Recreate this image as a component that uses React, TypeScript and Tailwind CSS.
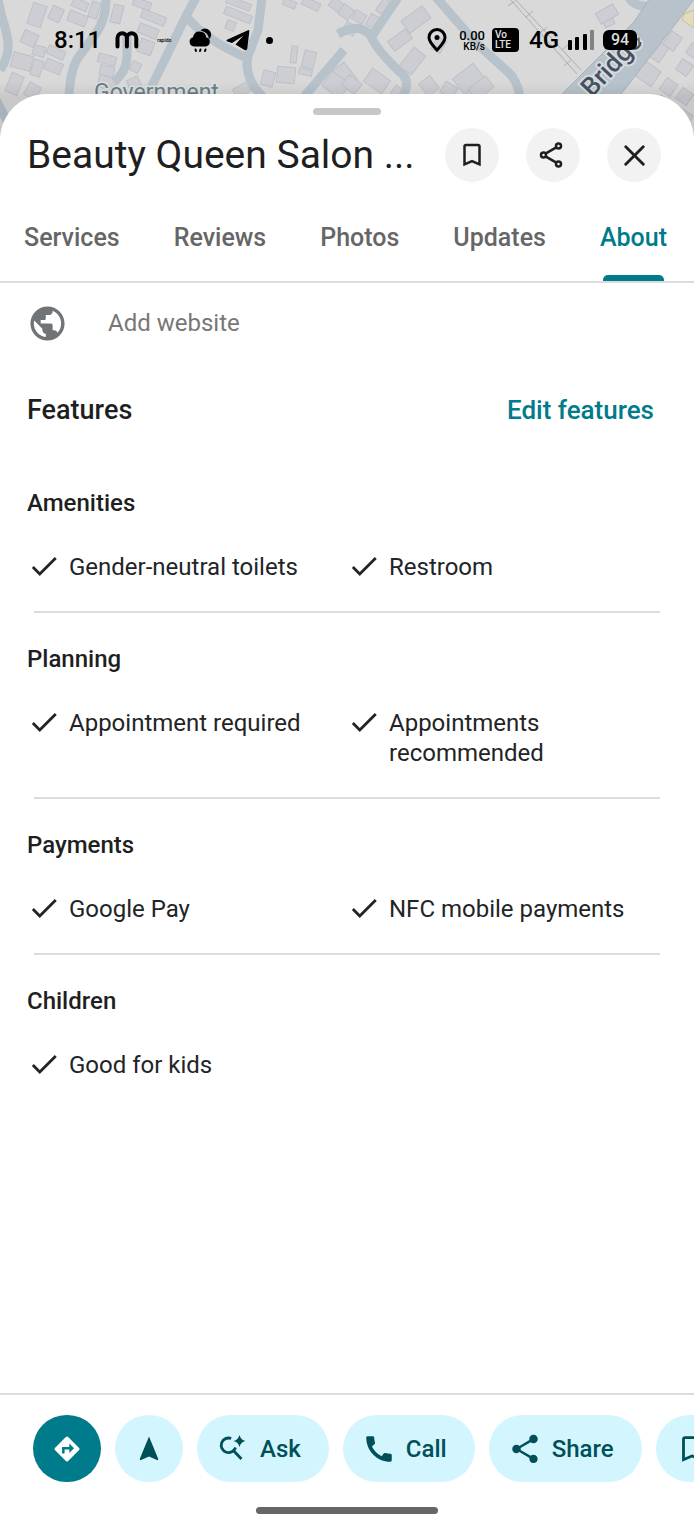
import type { ReactNode } from 'react'
import { X } from 'lucide-react'
import {
  MdBookmarkBorder,
  MdCall,
  MdCheck,
  MdNavigation,
  MdPublic,
  MdShare,
} from 'react-icons/md'

const tabs = ['Services', 'Reviews', 'Photos', 'Updates', 'About']

const featureGroups = [
  { title: 'Amenities', items: ['Gender-neutral toilets', 'Restroom'] },
  { title: 'Planning', items: ['Appointment required', 'Appointments recommended'] },
  { title: 'Payments', items: ['Google Pay', 'NFC mobile payments'] },
  { title: 'Children', items: ['Good for kids'] },
]

// x, y, width, height, rotation
const buildings = [
  [30, 4, 14, 22, 18], [50, 7, 12, 14, 25], [68, 13, 19, 11, 22], [72, 0, 16, 9, 24],
  [90, 2, 9, 16, 18], [112, 5, 10, 18, 14], [133, 0, 18, 8, 20], [141, 13, 25, 9, 22],
  [138, 26, 20, 10, 22], [22, 32, 15, 13, 25], [12, 54, 20, 15, 15], [33, 46, 12, 10, 15],
  [47, 48, 18, 9, 25], [45, 61, 17, 11, 22], [32, 60, 10, 16, 18], [8, 74, 13, 20, 22],
  [26, 84, 13, 14, 30], [98, 55, 18, 9, 15], [100, 66, 14, 10, 12], [98, 77, 17, 12, 20],
  [131, 62, 9, 10, 25], [128, 78, 12, 10, -25], [139, 40, 14, 14, 20], [226, 0, 25, 7, 20],
  [224, 11, 28, 8, 22], [226, 21, 9, 9, 20], [262, 71, 12, 15, 15], [277, 67, 18, 16, 5],
  [291, 46, 6, 17, 6], [303, 51, 12, 17, 14], [299, 69, 13, 6, 12], [283, 0, 13, 7, 22],
  [302, 0, 18, 8, 24], [330, 0, 13, 10, 35], [340, 6, 12, 12, 35], [338, 64, 14, 22, -38],
  [325, 76, 22, 18, 38], [234, 85, 16, 10, -28], [344, 24, 12, 10, 30], [353, 12, 12, 10, 30],
  [368, 15, 9, 12, 30], [376, 2, 15, 9, -55], [389, 34, 22, 12, -36], [403, 12, 26, 15, -36],
  [405, 49, 15, 24, 38], [434, 38, 10, 14, 30], [344, 78, 16, 13, 38], [366, 73, 22, 16, 35],
  [392, 88, 14, 10, 35], [422, 78, 14, 16, -38], [442, 84, 14, 12, 30], [456, 69, 26, 20, -38],
  [470, 81, 22, 14, -38], [597, 8, 20, 12, -30], [604, 20, 10, 6, -25], [636, 64, 22, 18, 35],
  [653, 43, 12, 18, 35], [666, 33, 13, 16, 35], [678, 61, 13, 13, 35], [662, 80, 13, 14, 35],
  [678, 90, 13, 13, 35], [688, 45, 12, 12, 35], [655, 98, 16, 16, 35], [674, 110, 16, 16, 35],
]

function MapBackdrop() {
  return (
    <svg
      className="absolute inset-x-0 top-0 h-[150px] w-full"
      viewBox="0 0 694 150"
      preserveAspectRatio="xMinYMin slice"
      aria-hidden="true"
    >
      <defs>
        <linearGradient id="sheet-shadow" x1="0" y1="0" x2="0" y2="1">
          <stop offset="0" stopColor="#000" stopOpacity="0" />
          <stop offset="1" stopColor="#000" stopOpacity="0.08" />
        </linearGradient>
      </defs>
      <rect width="694" height="150" fill="#d9d9d9" />
      <g fill="#cdced3" stroke="#bfc0c8" strokeWidth="1">
        {buildings.map(([x, y, w, h, r], i) => (
          <rect
            key={i}
            x={x}
            y={y}
            width={w}
            height={h}
            transform={`rotate(${r} ${x + w / 2} ${y + h / 2})`}
          />
        ))}
      </g>
      <g fill="none" stroke="#b8c2cb" strokeWidth="9">
        <path d="M-2 -2C1 26 18 44 0 70" />
        <path d="M-4 100L20 145" />
        <path d="M106 -2Q106 18 97 32L81 54Q70 66 69 98" />
        <path d="M197 -4L186 16L146 98" />
        <path d="M186 16Q205 40 247 58" />
        <path d="M262 -2L258 30L248 56Q243 78 264 98" />
        <path d="M127 36V58Q126 72 114 82" />
        <path d="M303 98L344 50" />
        <path d="M338 34Q360 22 371 36Q376 50 404 76Q410 84 402 98" />
        <path d="M372 36L399 -4" />
        <path d="M435 -4L475 42L506 70Q518 80 520 98" />
        <path d="M628 -4Q634 8 650 6" />
      </g>
      <path d="M558 98L634 22L650 -2H695L677 22L618 98Z" fill="#b8c2cb" stroke="#a8b1b9" />
      <path d="M684 14L694 10V28L682 20Z" fill="#e3dbbd" stroke="#c8bd94" />
      <g fill="none" stroke="#adadad" strokeWidth="1">
        <path d="M509 -2L577 74M514 -2L581 70" />
        <path d="M508 6l7 -5M526 17l7 -6M540 33l7 -6M562 50l7 -6M564 66l7 -6" />
      </g>
      <text
        x="94"
        y="100"
        className="font-[Roboto] text-[23px]"
        fill="#6c7f87"
        stroke="#dde1e3"
        strokeWidth="3"
        paintOrder="stroke"
      >
        Government
      </text>
      <text
        x="592"
        y="98"
        transform="rotate(-47 592 98)"
        className="font-[Roboto] text-[26px] font-medium"
        fill="#48525f"
        stroke="#d5dbe0"
        strokeWidth="4"
        paintOrder="stroke"
      >
        Bridge
      </text>
      <rect y="82" width="694" height="16" fill="url(#sheet-shadow)" />
      <rect y="98" width="694" height="52" fill="#000" opacity="0.08" />
    </svg>
  )
}

function StatusBar() {
  return (
    <div className="relative flex h-[94px] items-start justify-between px-[54px] pt-[25px] font-[Roboto,sans-serif] text-black">
      <div className="flex h-[30px] items-center">
        <span className="text-[24px] leading-[30px] font-medium">8:11</span>
        <svg className="ml-[14px] h-5 w-6" viewBox="0 0 24 20" fill="none" stroke="currentColor" strokeWidth="4" strokeLinecap="round">
          <path d="M2.500 16.500V8a4.700 4.700 0 0 1 9.400 0v8.500M11.900 16.500V8a4.700 4.700 0 0 1 9.400 0v8.500" />
        </svg>
        <span className="ml-[18px] text-[5px] leading-none font-medium">rapido</span>
        <svg className="ml-[18px] h-[26px] w-[24px]" viewBox="0 0 24 26" fill="currentColor">
          <path d="M11.500 3.500A6.200 6.200 0 1 1 20 12.500Q19.500 5 11.500 3.500Z" />
          <path d="M5 19.500A4.700 4.700 0 0 1 4 10.300Q5 4.500 10.500 4.600Q16.500 4.800 17.300 10.500A4.600 4.600 0 0 1 17 19.500Z" />
          <path d="M6.500 22.500l.5 1.500M11.500 22.500l-.5 1.500M16.500 22.500l-.5 1.500" stroke="currentColor" strokeWidth="2" strokeLinecap="round" />
        </svg>
        <svg className="ml-[13px] h-6 w-6" viewBox="0 0 24 24" fill="currentColor">
          <path d="M22 2.200L1.500 11.500Q-.5 12.800 1.500 13.600L6 15L17.500 7.500L9.500 16.500L18.500 22Q20.800 23 21.300 20.500L23.300 3.500Q23.400 1.800 22 2.200Z" />
        </svg>
        <span className="ml-4 size-[7px] rounded-full bg-black" />
      </div>

      <div className="flex h-[30px] items-center">
        <svg className="h-6 w-5" viewBox="0 0 20 24">
          <path d="M10 1.500A8 8 0 0 0 2 9.500C2 14 6 17.500 10 22C14 17.500 18 14 18 9.500A8 8 0 0 0 10 1.500Z" fill="none" stroke="currentColor" strokeWidth="3" />
          <circle cx="10" cy="9.500" r="2.500" fill="currentColor" />
        </svg>
        <div className="ml-3 flex flex-col items-end">
          <span className="text-[13px] leading-[13px] font-medium">0.00</span>
          <span className="text-[10px] leading-[10px] font-medium">KB/s</span>
        </div>
        <div className="ml-[7px] flex h-6 w-[27px] flex-col justify-center rounded-[4px] bg-black pl-[3px] text-[10px] leading-[10px] font-medium text-[#e0e0e0]">
          <span>Vo</span>
          <span>LTE</span>
        </div>
        <span className="ml-[10px] text-[24px] leading-[30px] font-medium">4G</span>
        <svg className="ml-[9px] h-5 w-[26px]" viewBox="0 0 26 20" fill="currentColor">
          <rect y="10" width="4" height="10" rx="1" />
          <rect x="7" y="7" width="4" height="13" rx="1" />
          <rect x="15" y="4" width="4" height="16" rx="1" />
          <rect x="22" width="4" height="20" rx="1" opacity="0.4" />
        </svg>
        <span className="ml-[9px] flex h-5 w-[34px] items-center justify-center rounded-[6px] bg-black text-[16px] leading-none font-medium text-[#dcdcdc]">
          94
        </span>
        <span className="ml-px h-[7px] w-[2px] rounded-r bg-[#777]" />
      </div>
    </div>
  )
}

function IconButton({ label, children }: { label: string; children: ReactNode }) {
  return (
    <button
      type="button"
      aria-label={label}
      className="flex size-[54px] shrink-0 items-center justify-center rounded-full bg-[#f2f2f2] text-[#1f1f1f]"
    >
      {children}
    </button>
  )
}

function ShareOutline() {
  return (
    <svg className="size-[30px]" viewBox="0 0 30 30" fill="none" stroke="currentColor" strokeWidth="2.500">
      <circle cx="20.500" cy="6" r="2.500" />
      <circle cx="5.500" cy="15" r="2.500" />
      <circle cx="20.500" cy="24" r="2.500" />
      <path d="M7.500 13.600L18.300 7.300M7.500 16.400L18.300 22.700" />
    </svg>
  )
}

function DirectionsIcon() {
  return (
    <svg className="size-[30px]" viewBox="0 0 30 30">
      <path
        d="M13.900 2.900Q15 1.900 16.100 2.900L27.100 13.900Q28.100 15 27.100 16.100L16.100 27.100Q15 28.100 13.900 27.100L2.900 16.100Q1.900 15 2.900 13.900Z"
        fill="#fff"
      />
      <path d="M11.300 19.500V14.200H18.500" fill="none" stroke="#007b8b" strokeWidth="2.500" />
      <path d="M17.300 9.500L22 14.200L17.300 18.900Z" fill="#007b8b" />
    </svg>
  )
}

function AskIcon() {
  return (
    <svg className="size-[34px]" viewBox="0 0 34 34">
      <g fill="none" stroke="currentColor" strokeWidth="2.800">
        <path d="M15.200 6.500A7.300 7.300 0 1 0 19.500 15.500" />
        <path d="M16.800 18L25.500 27" />
      </g>
      <path d="M23.500 3Q24.700 7.800 29.500 9Q24.700 10.200 23.500 15Q22.300 10.200 17.500 9Q22.300 7.800 23.500 3Z" fill="currentColor" />
    </svg>
  )
}

function ActionChip({ label, children }: { label: string; children: ReactNode }) {
  return (
    <button
      type="button"
      className="flex h-[67px] shrink-0 items-center gap-[10px] rounded-full bg-[#d3f6fe] pr-7 pl-[19px] text-[24px] leading-[30px] font-medium text-[#004f59]"
    >
      {children}
      {label}
    </button>
  )
}

export default function App() {
  return (
    <div className="relative flex min-h-screen flex-col overflow-hidden bg-white font-[Roboto,sans-serif] text-[#1f1f1f]">
      <MapBackdrop />
      <StatusBar />

      <main className="relative flex flex-1 flex-col rounded-t-[46px] bg-white">
        <div className="mx-auto mt-[14px] h-[7px] w-[68px] rounded-full bg-[#c7c7c7]" />

        {/* Place header */}
        <header className="mt-[13px] flex items-center gap-[27px] pr-[33px] pl-[27px]">
          <h1 className="min-w-0 flex-1 text-[39px] leading-[54px] whitespace-nowrap">
            Beauty Queen Salon ...
          </h1>
          <IconButton label="Save">
            <MdBookmarkBorder size={30} />
          </IconButton>
          <IconButton label="Share">
            <ShareOutline />
          </IconButton>
          <IconButton label="Close">
            <X size={35} strokeWidth={2} />
          </IconButton>
        </header>

        {/* Tabs */}
        <nav className="flex h-[101px] justify-between border-b-2 border-[#dadcdf] pr-[27px] pl-6">
          {tabs.map((tab) => (
            <a
              key={tab}
              href={`#${tab.toLowerCase()}`}
              className={
                tab === 'About'
                  ? 'flex flex-col justify-between pt-[41px] text-[25px] leading-[30px] font-medium text-[#007b8b]'
                  : 'pt-[41px] text-[25px] leading-[30px] font-medium text-[#666]'
              }
            >
              {tab}
              {tab === 'About' && <span className="mx-[3px] h-[6px] rounded-t-[5px] bg-[#007b8b]" />}
            </a>
          ))}
        </nav>

        <a href="#website" className="flex h-20 items-center gap-10 pl-[27px] text-[24px] leading-[30px] text-[#777]">
          <MdPublic size={41} color="#6f7478" />
          Add website
        </a>

        {/* Features */}
        <div className="mt-8 flex items-center justify-between pr-10 pl-[27px]">
          <h2 className="text-[27px] leading-[30px] font-medium">Features</h2>
          <button type="button" className="text-[26px] leading-[30px] font-medium text-[#007b8b]">
            Edit features
          </button>
        </div>

        <div className="mt-8">
          {featureGroups.map((group, index) => (
            <section key={group.title}>
              <h3 className="pt-[31px] pl-[27px] text-[24px] leading-[30px] font-medium">{group.title}</h3>
              <ul className="mt-[34px] mr-[27px] ml-[27px] grid grid-cols-2 pb-[29px]">
                {group.items.map((item) => (
                  <li key={item} className="flex gap-2 text-[24px] leading-[30px] text-[#222427]">
                    <MdCheck size={34} className="-mt-[3px] -mb-px shrink-0" />
                    {item}
                  </li>
                ))}
              </ul>
              {index < featureGroups.length - 1 && <hr className="mx-[34px] border-t-2 border-[#dcdcdc]" />}
            </section>
          ))}
        </div>
      </main>

      {/* Bottom actions */}
      <footer className="relative border-t-2 border-[#dcdcdc] bg-white">
        <div className="flex gap-[14px] overflow-hidden pt-5 pl-[33px]">
          <button
            type="button"
            aria-label="Directions"
            className="flex h-[67px] w-[68px] shrink-0 items-center justify-center rounded-full bg-[#007b8b]"
          >
            <DirectionsIcon />
          </button>
          <button
            type="button"
            aria-label="Start navigation"
            className="flex h-[67px] w-[68px] shrink-0 items-center justify-center rounded-full bg-[#d3f6fe] text-[#004f59]"
          >
            <MdNavigation size={30} />
          </button>
          <ActionChip label="Ask">
            <AskIcon />
          </ActionChip>
          <ActionChip label="Call">
            <MdCall size={34} />
          </ActionChip>
          <ActionChip label="Share">
            <MdShare size={34} />
          </ActionChip>
          <button
            type="button"
            aria-label="Save"
            className="flex h-[67px] w-[140px] shrink-0 items-center rounded-full bg-[#d3f6fe] pl-[19px] text-[#004f59]"
          >
            <MdBookmarkBorder size={34} />
          </button>
        </div>
        <div className="mx-auto mt-[25px] mb-[22px] h-[7px] w-[182px] rounded-full bg-[#666]" />
      </footer>
    </div>
  )
}
